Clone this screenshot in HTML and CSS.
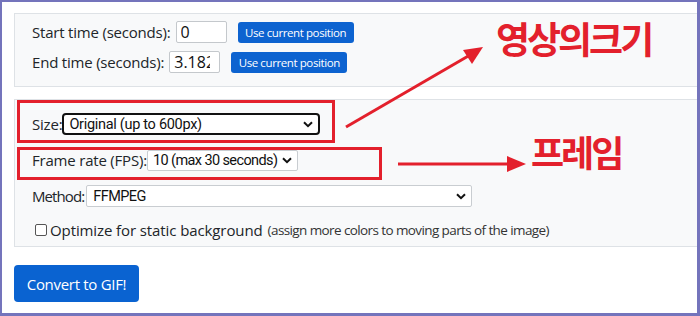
FILE: index.html
```html
<!DOCTYPE html>
<html lang="en">
<head>
<meta charset="utf-8">
<title>Convert to GIF</title>
<link rel="stylesheet" href="styles.css">
</head>
<body>
<div class="frame">
  <div class="panel panel-time">
    <div class="row">
      <label class="lbl" for="start">Start time (seconds):</label>
      <input class="num" id="start" type="text" value="0">
      <button class="btn-sm">Use current position</button>
    </div>
    <div class="row">
      <label class="lbl" for="end">End time (seconds):</label>
      <input class="num" id="end" type="text" value="3.182">
      <button class="btn-sm">Use current position</button>
    </div>
  </div>

  <div class="panel panel-opts">
    <div class="row">
      <label class="lbl lbl-tight" for="size">Size:</label>
      <div class="sel sel-focus sel-size">
        <span class="sel-text">Original (up to 600px)</span>
        <svg class="chev" viewBox="0 0 10 7" width="10" height="7"><path d="M1 1.2 L5 5.2 L9 1.2" fill="none" stroke="#111" stroke-width="2"/></svg>
      </div>
    </div>
    <div class="row">
      <label class="lbl lbl-tight" for="fps">Frame rate (FPS):</label>
      <div class="sel sel-fps">
        <span class="sel-text sel-text-fps">10 (max 30 seconds)</span>
        <svg class="chev" viewBox="0 0 10 7" width="10" height="7"><path d="M1 1.2 L5 5.2 L9 1.2" fill="none" stroke="#111" stroke-width="2"/></svg>
      </div>
    </div>
    <div class="row">
      <label class="lbl lbl-narrow" for="method">Method:</label>
      <div class="sel sel-method">
        <span class="sel-text sel-text-narrow">FFMPEG</span>
        <svg class="chev" viewBox="0 0 10 7" width="10" height="7"><path d="M1 1.2 L5 5.2 L9 1.2" fill="none" stroke="#111" stroke-width="2"/></svg>
      </div>
    </div>
    <div class="row row-check">
      <span class="check"></span>
      <span class="check-label">Optimize for static background</span>
      <span class="hint">(assign more colors to moving parts of the image)</span>
    </div>
  </div>

  <button class="btn-lg">Convert to GIF!</button>

  <svg class="annot" width="700" height="316" viewBox="0 0 700 316">
    <rect x="18.5" y="101.5" width="315" height="40" fill="none" stroke="#e3202c" stroke-width="3"/>
    <rect x="18.5" y="148.5" width="362" height="30" fill="none" stroke="#e3202c" stroke-width="3"/>
    <line x1="346" y1="127" x2="470" y2="55" stroke="#e3202c" stroke-width="3"/>
    <polygon points="483,47 463,50 472,64" fill="#e3202c"/>
    <line x1="398" y1="164" x2="510" y2="164" stroke="#e3202c" stroke-width="3"/>
    <polygon points="526,164 507,156 507,172" fill="#e3202c"/>
  </svg>
  <div class="note note-size">영상의크기</div>
  <div class="note note-fps">프레임</div>
</div>
</body>
</html>
```
FILE: styles.css
```css
html, body {
  margin: 0;
  padding: 0;
  background: #fff;
}
.frame {
  position: relative;
  box-sizing: border-box;
  width: 700px;
  height: 316px;
  border-style: solid;
  border-color: #7474bc;
  border-width: 2px 3px 3px 2px;
  padding: 11px 0 0 12px;
  overflow: hidden;
  font-family: "Open Sans", "Noto Sans", sans-serif;
  color: #212529;
}
.panel {
  background: #f8f9fa;
  border: 1px solid #dee2e6;
  margin-right: -20px;
  display: flex;
  flex-direction: column;
}
.panel-time {
  padding: 7px 0 13px 17px;
  gap: 8px;
}
.panel-opts {
  margin-top: 12px;
  padding: 13px 0 7px 17px;
  gap: 14px;
}
.row {
  display: flex;
  align-items: center;
  height: 22px;
}
.lbl {
  font-size: 15px;
  letter-spacing: -0.2px;
  margin-right: 5px;
  white-space: nowrap;
}
.lbl-tight {
  margin-right: 0;
}
.lbl-narrow {
  font-size: 15px;
  letter-spacing: -0.9px;
  margin-right: 2px;
}
.num {
  box-sizing: border-box;
  width: 51px;
  height: 22px;
  border: 1px solid #c4c8cc;
  border-radius: 2px;
  padding: 0 9px 0 4px;
  font-family: "Open Sans", sans-serif;
  font-size: 16px;
  color: #111;
  background: #fff;
  margin: 0 11px 0 0;
}
.btn-sm {
  box-sizing: border-box;
  width: 116px;
  height: 21px;
  border: none;
  border-radius: 3px;
  background: #0d63d0;
  color: #fff;
  font-family: "Open Sans", sans-serif;
  font-size: 11.5px;
  letter-spacing: -0.4px;
  padding: 0;
}
.sel {
  position: relative;
  box-sizing: border-box;
  height: 22px;
  background: #fff;
  border: 1px solid #c9cdd1;
  border-radius: 2px;
  display: flex;
  align-items: center;
  padding: 0 0 0 6px;
}
.sel-focus {
  border: 2px solid #111;
  border-radius: 4px;
  padding-left: 5px;
}
.sel-size { width: 258px; }
.sel-fps { width: 151px; height: 21px; padding-left: 5px; }
.sel-method { width: 386px; }
.sel-text {
  font-family: Roboto, "Open Sans", sans-serif;
  font-size: 14.5px;
  letter-spacing: -0.3px;
  color: #111;
  white-space: nowrap;
}
.sel-text-fps {
  letter-spacing: -0.6px;
}
.sel-text-narrow {
  letter-spacing: -0.6px;
}
.chev {
  position: absolute;
  right: 5px;
  top: 50%;
  margin-top: -3px;
}
.row-check {
  height: 18px;
  padding-left: 3px;
}
.check {
  box-sizing: border-box;
  width: 12px;
  height: 12px;
  border: 1px solid #555;
  border-radius: 2px;
  background: #fff;
  margin-right: 3px;
}
.check-label {
  font-size: 15px;
  letter-spacing: -0.1px;
  margin-right: 5px;
}
.hint {
  font-size: 13.5px;
  letter-spacing: -0.6px;
  color: #333;
}
.btn-lg {
  margin-top: 18px;
  box-sizing: border-box;
  width: 125px;
  height: 37px;
  border: none;
  border-radius: 4px;
  background: #0a63d1;
  color: #fff;
  font-family: "Open Sans", sans-serif;
  font-size: 15px;
  letter-spacing: -0.3px;
  padding: 0;
  display: block;
}
.annot {
  position: absolute;
  left: -2px;
  top: -2px;
}
.note {
  position: absolute;
  font-family: "Noto Sans CJK KR", sans-serif;
  font-weight: 700;
  color: #e3202c;
  line-height: 1;
  white-space: nowrap;
}
.note-size {
  left: 494px;
  top: 18px;
  font-size: 37px;
  letter-spacing: -3px;
}
.note-fps {
  left: 529px;
  top: 131px;
  font-size: 36px;
  letter-spacing: -3px;
}
```
